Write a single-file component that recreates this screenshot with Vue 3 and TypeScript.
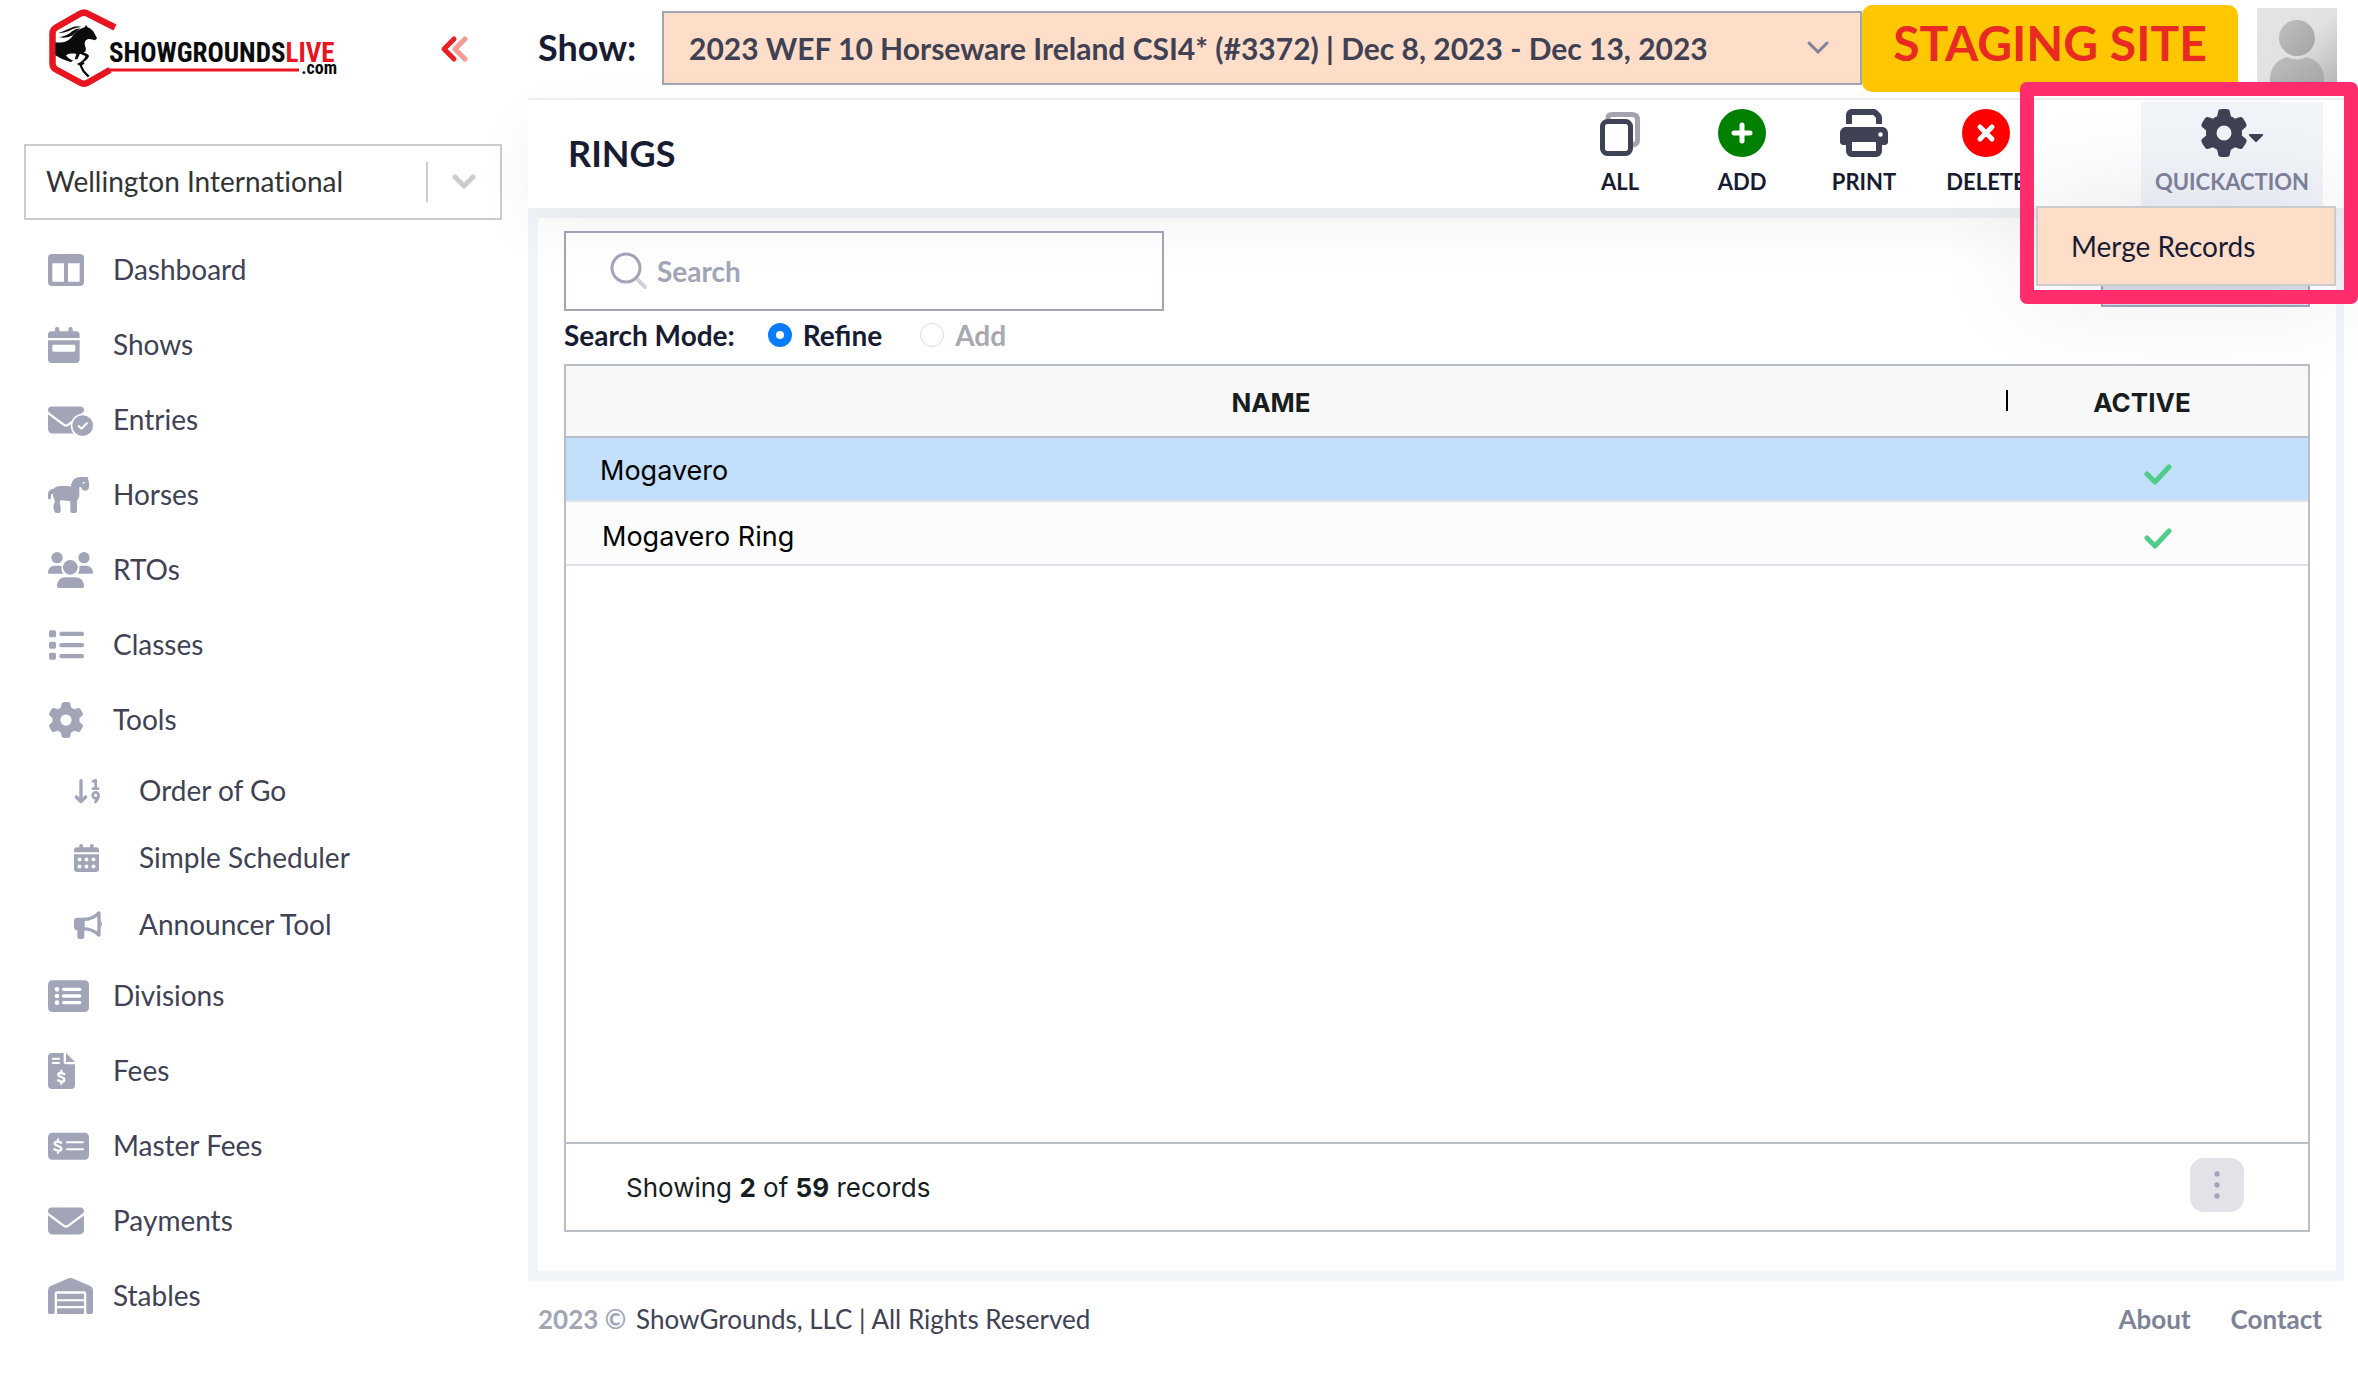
<script setup lang="ts">
import { ref } from 'vue'

type IconName =
  | 'dashboard' | 'shows' | 'entries' | 'horses' | 'rtos' | 'classes' | 'tools'
  | 'order' | 'scheduler' | 'announcer' | 'divisions' | 'fees' | 'master' | 'payments' | 'stables'

interface NavItem {
  label: string
  icon: IconName
  width: number
  sub?: boolean
}

interface Ring {
  name: string
  active: boolean
}

const navItems: NavItem[] = [
  { label: 'Dashboard', icon: 'dashboard', width: 108 },
  { label: 'Shows', icon: 'shows', width: 95 },
  { label: 'Entries', icon: 'entries', width: 135 },
  { label: 'Horses', icon: 'horses', width: 123 },
  { label: 'RTOs', icon: 'rtos', width: 135 },
  { label: 'Classes', icon: 'classes', width: 108 },
  { label: 'Tools', icon: 'tools', width: 108 },
  { label: 'Order of Go', icon: 'order', width: 84, sub: true },
  { label: 'Simple Scheduler', icon: 'scheduler', width: 84, sub: true },
  { label: 'Announcer Tool', icon: 'announcer', width: 84, sub: true },
  { label: 'Divisions', icon: 'divisions', width: 123 },
  { label: 'Fees', icon: 'fees', width: 81 },
  { label: 'Master Fees', icon: 'master', width: 123 },
  { label: 'Payments', icon: 'payments', width: 108 },
  { label: 'Stables', icon: 'stables', width: 135 },
]

const rings: Ring[] = [
  { name: 'Mogavero', active: true },
  { name: 'Mogavero Ring', active: true },
]

const selected = ref(0)
const search = ref('')
const searchMode = ref('refine')

const gearPath =
  'M495.9 166.6c3.2 8.7 .5 18.4-6.4 24.6l-43.3 39.4c1.1 8.3 1.7 16.8 1.7 25.4s-.6 17.1-1.7 25.4l43.3 39.4c6.9 6.2 9.6 15.9 6.4 24.6c-4.4 11.9-9.7 23.3-15.8 34.3l-4.7 8.1c-6.6 11-14 21.4-22.1 31.2c-5.9 7.2-15.7 9.6-24.5 6.8l-55.7-17.7c-13.4 10.3-28.2 18.9-44 25.4l-12.5 57.1c-2 9.1-9 16.3-18.2 17.8c-13.8 2.3-28 3.5-42.5 3.5s-28.7-1.2-42.5-3.5c-9.2-1.5-16.2-8.7-18.2-17.8l-12.5-57.1c-15.8-6.5-30.6-15.1-44-25.4L83.1 425.9c-8.8 2.8-18.6 .3-24.5-6.8c-8.1-9.8-15.5-20.2-22.1-31.2l-4.7-8.1c-6.1-11-11.4-22.4-15.8-34.3c-3.2-8.7-.5-18.4 6.4-24.6l43.3-39.4C64.6 273.1 64 264.6 64 256s.6-17.1 1.7-25.4L22.4 191.2c-6.9-6.2-9.6-15.9-6.4-24.6c4.4-11.9 9.7-23.3 15.8-34.3l4.7-8.1c6.6-11 14-21.4 22.1-31.2c5.9-7.2 15.7-9.6 24.5-6.8l55.7 17.7c13.4-10.3 28.2-18.9 44-25.4l12.5-57.1c2-9.1 9-16.3 18.2-17.8C227.3 1.2 241.5 0 256 0s28.7 1.2 42.5 3.5c9.2 1.5 16.2 8.7 18.2 17.8l12.5 57.1c15.8 6.5 30.6 15.1 44 25.4l55.7-17.7c8.8-2.8 18.6-.3 24.5 6.8c8.1 9.8 15.5 20.2 22.1 31.2l4.7 8.1c6.1 11 11.4 22.4 15.8 34.3zM256 336a80 80 0 1 0 0-160 80 80 0 1 0 0 160z'
const envelopePath =
  'M48 64C21.5 64 0 85.5 0 112c0 15.1 7.1 29.3 19.2 38.4L236.8 313.6c11.4 8.5 27 8.5 38.4 0L492.8 150.4c12.1-9.1 19.2-23.3 19.2-38.4c0-26.5-21.5-48-48-48H48zM0 176V384c0 35.3 28.7 64 64 64H448c35.3 0 64-28.7 64-64V176L294.4 339.2c-22.8 17.1-54 17.1-76.8 0L0 176z'
</script>

<template>
  <div class="app">
    <aside class="sidebar">
      <div class="brand">
        <a href="#" aria-label="ShowGroundsLive home">
          <svg class="logo" width="310" height="80" viewBox="0 0 310 80">
            <path d="M66 18.5L39 4.800Q35 2.500 31 4.800L7 18.500Q3.500 20.500 3.500 24.500V54.500Q3.500 58.500 7 60.500L31 73.500Q35 76 39 73.500L61 61" fill="none" stroke="#e8141f" stroke-width="6.500" />
            <path d="M57 59.500H250V62.500H57z" fill="#e8141f" />
            <g transform="translate(-9 -9) scale(.33333)" fill="#0b0b0b">
              <path d="M46 127C70 130 88 122 96 110C108 92 122 86 134 82L138 75L143 82C152 86 160 92 163 100L171 114Q169 120 163 121C156 116 148 118 144 117C134 122 132 128 136 140C140 150 136 156 130 158Q144 160 147 168Q144 178 130 186L134 190L124 199L110 192L122 186Q136 174 136 168L120 161L112 178L104 178L109 162C98 160 84 160 78 167Q86 176 100 182L92 186Q66 180 46 166z" />
              <path d="M118 196L124 194L134 212L149 228L143 232L128 216z" />
              <path d="M54 100Q74 92 92 84Q108 76 124 81Q100 84 88 92Q74 98 54 100zM57 112Q84 108 96 94Q108 85 122 85Q104 98 98 106Q84 116 57 112z" />
            </g>
            <text x="60" y="53" class="logo-name"><tspan fill="#0b0b0b">SHOWGROUNDS</tspan><tspan fill="#e8141f">LIVE</tspan></text>
            <text x="288" y="65" text-anchor="end" class="logo-com" fill="#0b0b0b">.com</text>
          </svg>
        </a>
        <button class="collapse" type="button" aria-label="Collapse sidebar">
          <svg width="28" height="28" viewBox="0 0 28 28" fill="none" stroke-width="5" stroke-linecap="round" stroke-linejoin="round">
            <path d="M25 4L15 14L25 24" stroke="#f99a94" />
            <path d="M14 4L4 14L14 24" stroke="#ec2020" />
          </svg>
        </button>
      </div>

      <div class="venue">
        <select aria-label="Venue">
          <option>Wellington International</option>
        </select>
        <span class="venue-mark">
          <svg width="26" height="18" viewBox="0 0 26 18" fill="none" stroke="#ccc" stroke-width="5" stroke-linecap="round" stroke-linejoin="round"><path d="M4 4L13 13L22 4" /></svg>
        </span>
      </div>

      <nav>
        <a v-for="item in navItems" :key="item.label" href="#" :class="['nav-item', { sub: item.sub }]">
          <span class="nav-icon">
            <svg :viewBox="`0 0 ${item.width} ${item.sub ? 84 : 108}`" fill="currentColor">
              <template v-if="item.icon === 'dashboard'">
                <path fill-rule="evenodd" d="M12 6H96Q108 6 108 18V90Q108 102 96 102H12Q0 102 0 90V18Q0 6 12 6zM13 34V86Q13 89 16 89H48V34zM60 34V89H92Q95 89 95 86V34z" />
              </template>
              <template v-else-if="item.icon === 'shows'">
                <rect x="21" y="0" width="13" height="24" rx="6" />
                <rect x="61" y="0" width="13" height="24" rx="6" />
                <path d="M0 33V24Q0 13 11 13H84Q95 13 95 24V33zM0 40H95V97Q95 108 84 108H11Q0 108 0 97z" />
                <rect x="13" y="53" width="69" height="21" rx="4" fill="#fff" />
              </template>
              <template v-else-if="item.icon === 'entries'">
                <path transform="scale(.211)" :d="envelopePath" />
                <circle cx="104" cy="71" r="36" fill="#fff" />
                <circle cx="104" cy="71" r="31" />
                <path d="M92 72L100 80L117 64" fill="none" stroke="#fff" stroke-width="6" stroke-linecap="round" stroke-linejoin="round" />
              </template>
              <template v-else-if="item.icon === 'horses'">
                <path d="M69 30C69 12 80 0 97 0H121Q122 2 119 7Q123 11 123 18V30C123 37 117 41 111 41C104 41 102 37 99 31L94 29V52C94 60 91 66 87 71V102Q87 108 81 108H73Q67 108 67 102V73L38 69C35 76 34 82 38 88V102Q38 108 32 108H26Q20 108 19 103C16 94 15 88 19 79Q22 74 19 68Q14 60 15 50C9 50 9 53 9 58V64Q7 68 3 67Q0 66 0 62V52C0 42 8 36 17 35C22 30 28 27 36 27H62Q68 27 69 30z" />
                <circle cx="107" cy="17" r="3" fill="#fff" />
              </template>
              <template v-else-if="item.icon === 'rtos'">
                <circle cx="27" cy="17" r="17" /><circle cx="108" cy="17" r="17" /><circle cx="67" cy="46" r="22" />
                <path d="M0 62C0 49 9 41 21 41H32Q37 41 41 43Q38 55 45 65H3Q0 65 0 62zM135 62C135 49 126 41 114 41H103Q98 41 94 43Q97 55 90 65H132Q135 65 135 62zM27 103C27 86 38 76 54 76H81C97 76 108 86 108 103Q108 108 103 108H32Q27 108 27 103z" />
              </template>
              <template v-else-if="item.icon === 'classes'">
                <rect x="3" y="10" width="21" height="21" rx="5" /><rect x="3" y="44" width="21" height="21" rx="5" /><rect x="3" y="77" width="21" height="21" rx="5" />
                <rect x="34" y="14" width="74" height="13" rx="6" /><rect x="34" y="48" width="74" height="13" rx="6" /><rect x="34" y="81" width="74" height="13" rx="6" />
              </template>
              <path v-else-if="item.icon === 'tools'" transform="scale(.211)" :d="gearPath" />
              <template v-else-if="item.icon === 'order'">
                <g fill="none" stroke="currentColor" stroke-width="10" stroke-linecap="round" stroke-linejoin="round">
                  <path d="M21 11V73M7 60L21 74L35 60" />
                  <path stroke-width="8" d="M57 13L65 10V34M57 35H72" />
                  <circle cx="65" cy="55" r="9" stroke-width="8" />
                  <path stroke-width="8" d="M74 57Q73 66 64 75" />
                </g>
              </template>
              <template v-else-if="item.icon === 'scheduler'">
                <rect x="16" y="0" width="11" height="18" rx="5" /><rect x="48" y="0" width="11" height="18" rx="5" />
                <path d="M0 25V19Q0 10 9 10H66Q75 10 75 19V25zM0 31H75V75Q75 84 66 84H9Q0 84 0 75z" />
                <g fill="#fff">
                  <rect x="11" y="41" width="11" height="11" rx="3" /><rect x="32" y="41" width="11" height="11" rx="3" /><rect x="53" y="41" width="11" height="11" rx="3" />
                  <rect x="11" y="62" width="11" height="11" rx="3" /><rect x="32" y="62" width="11" height="11" rx="3" /><rect x="53" y="62" width="11" height="11" rx="3" />
                </g>
              </template>
              <template v-else-if="item.icon === 'announcer'">
                <path d="M10 20H32V58H31V78Q31 84 25 84H16Q10 84 10 78V58Q0 57 0 48V30Q0 20 10 20z" />
                <path d="M28 25Q56 25 75 6V72Q56 54 28 53" fill="none" stroke="currentColor" stroke-width="10" stroke-linejoin="round" />
                <path d="M79 29Q84 32 84 39T79 49z" />
              </template>
              <template v-else-if="item.icon === 'divisions'">
                <rect x="0" y="7" width="123" height="95" rx="13" />
                <g fill="#fff">
                  <circle cx="27" cy="34" r="7" /><circle cx="27" cy="54" r="7" /><circle cx="27" cy="74" r="7" />
                  <rect x="42" y="29" width="58" height="10" rx="5" /><rect x="42" y="49" width="58" height="10" rx="5" /><rect x="42" y="69" width="58" height="10" rx="5" />
                </g>
              </template>
              <template v-else-if="item.icon === 'fees'">
                <path d="M12 0H47V28Q47 34 53 34H81V96Q81 108 69 108H12Q0 108 0 96V12Q0 0 12 0zM54 0L81 27H54z" />
                <path d="M14 17H33M14 30H33" stroke="#fff" stroke-width="6" stroke-linecap="round" />
                <path d="M49 63Q42 60 38 60Q31 60 31 65Q31 69 40 72Q49 75 49 80Q49 86 41 86Q36 86 30 82M40 53V59M40 86V92" fill="none" stroke="#fff" stroke-width="7" stroke-linecap="round" />
              </template>
              <template v-else-if="item.icon === 'master'">
                <rect x="0" y="14" width="123" height="81" rx="13" />
                <path d="M57 43H105M57 64H105" stroke="#fff" stroke-width="6" stroke-linecap="round" />
                <path d="M39 44Q32 41 28 41Q20 41 20 46Q20 51 30 54Q40 57 40 62Q40 68 31 68Q26 68 19 64M30 34V40M30 68V74" fill="none" stroke="#fff" stroke-width="7" stroke-linecap="round" />
              </template>
              <path v-else-if="item.icon === 'payments'" transform="scale(.211)" :d="envelopePath" />
              <path v-else d="M0 37Q0 28 8 24L62 1Q67 -1 73 1L127 24Q135 28 135 37V103Q135 108 130 108H120Q115 108 115 103V47Q115 40 108 40H27Q20 40 20 47V103Q20 108 15 108H5Q0 108 0 103zM27 47H108V64H27zM27 70H108V84H27zM27 91H108V104Q108 108 104 108H31Q27 108 27 104z" />
            </svg>
          </span>
          <span class="nav-label">{{ item.label }}</span>
        </a>
      </nav>
    </aside>

    <div class="main">
      <header class="topbar">
        <label class="show-label" for="show">Show:</label>
        <div class="show-select">
          <select id="show">
            <option>2023 WEF 10 Horseware Ireland CSI4* (#3372) | Dec 8, 2023 - Dec 13, 2023</option>
          </select>
          <svg width="24" height="16" viewBox="0 0 24 16" fill="none" stroke="#7e8299" stroke-width="3" stroke-linecap="round" stroke-linejoin="round"><path d="M3 3L12 12L21 3" /></svg>
        </div>
        <div class="staging">STAGING SITE</div>
        <svg class="avatar" width="80" height="80" viewBox="0 0 80 80" role="img" aria-label="User">
          <defs>
            <linearGradient id="av-bg" x1="0" y1="0" x2="1" y2="1">
              <stop offset="0" stop-color="#e4e4e4" /><stop offset=".5" stop-color="#e2e2e2" /><stop offset="1" stop-color="#b4b4b4" />
            </linearGradient>
            <linearGradient id="av-fg" x1="0" y1="0" x2="1" y2="1">
              <stop offset="0" stop-color="#bdbfc1" /><stop offset="1" stop-color="#a4a4a6" />
            </linearGradient>
          </defs>
          <rect width="80" height="80" fill="url(#av-bg)" />
          <circle cx="40" cy="30" r="18" fill="url(#av-fg)" />
          <path d="M13 80V72Q13 54 30 49Q40 54 50 49Q67 54 67 72V80z" fill="url(#av-fg)" />
        </svg>
      </header>

      <div class="toolbar">
        <h1>RINGS</h1>
        <div class="actions">
          <button class="action" type="button">
            <svg width="48" height="48" viewBox="0 0 48 48" fill="none" stroke-width="5">
              <path d="M12 10V9Q12 5.500 16 5.500H36Q41.500 5.500 41.500 11V31Q41.500 35 37 36" stroke="#a3a4ae" />
              <rect x="6.500" y="12.500" width="28" height="32" rx="5" stroke="#3f4254" />
            </svg>
            ALL
          </button>
          <button class="action" type="button">
            <svg width="48" height="48" viewBox="0 0 48 48"><circle cx="24" cy="24" r="24" fill="green" /><path d="M24 16V32M16 24H32" stroke="#fff" stroke-width="5" stroke-linecap="round" /></svg>
            ADD
          </button>
          <button class="action" type="button">
            <svg width="48" height="48" viewBox="0 0 512 512" fill="#3f4254"><path d="M128 0C92.7 0 64 28.7 64 64v96h64V64H354.7L384 93.3V160h64V93.3c0-17-6.7-33.3-18.7-45.3L400 18.7C388 6.7 371.7 0 354.7 0H128zM384 352v32 64H128V384 368 352H384zm64 32h32c17.7 0 32-14.3 32-32V256c0-35.3-28.7-64-64-64H64c-35.3 0-64 28.7-64 64v96c0 17.7 14.3 32 32 32H64v64c0 35.3 28.7 64 64 64H384c35.3 0 64-28.7 64-64V384zM432 248a24 24 0 1 1 0 48 24 24 0 1 1 0-48z" /></svg>
            PRINT
          </button>
          <button class="action" type="button">
            <svg width="48" height="48" viewBox="0 0 48 48"><circle cx="24" cy="24" r="24" fill="red" /><path d="M18 18L30 30M30 18L18 30" stroke="#fff" stroke-width="5" stroke-linecap="round" /></svg>
            DELETE
          </button>
        </div>
        <div class="quick">
          <button class="action quick-btn" type="button" aria-haspopup="menu" aria-expanded="true">
            <span class="quick-icon">
              <svg width="48" height="48" viewBox="0 0 512 512" fill="#3f4254"><path :d="gearPath" /></svg>
              <svg width="16" height="10" viewBox="0 0 16 10" fill="#3f4254"><path d="M2 1H14Q16 1.500 14.500 3L9 8.500Q8 9.500 7 8.500L1.500 3Q0 1.500 2 1z" /></svg>
            </span>
            QUICKACTION
          </button>
          <div class="menu" role="menu">
            <button type="button" role="menuitem">Merge Records</button>
          </div>
          <div class="highlight"></div>
        </div>
      </div>

      <main class="content">
        <div class="search-row">
          <div class="search">
            <svg width="40" height="40" viewBox="0 0 40 40" fill="none" stroke-linecap="round">
              <path d="M29 29L36 36" stroke="#d0d2db" stroke-width="4" />
              <circle cx="17" cy="17" r="14" stroke="#a1a5b7" stroke-width="3" />
            </svg>
            <input v-model="search" type="text" placeholder="Search" aria-label="Search" />
          </div>
          <button class="view-btn" type="button" aria-label="View options"></button>
        </div>

        <div class="mode" role="radiogroup" aria-label="Search Mode">
          <span class="mode-title">Search Mode:</span>
          <label class="mode-option"><input v-model="searchMode" type="radio" name="mode" value="refine" />Refine</label>
          <label class="mode-option disabled"><input v-model="searchMode" type="radio" name="mode" value="add" disabled />Add</label>
        </div>

        <section class="grid">
          <table>
            <thead>
              <tr>
                <th class="name-head">NAME</th>
                <th class="active-head">ACTIVE</th>
              </tr>
            </thead>
            <tbody>
              <tr v-for="(ring, i) in rings" :key="ring.name" :class="{ selected: i === selected }" @click="selected = i">
                <td class="name">{{ ring.name }}</td>
                <td class="flag">
                  <svg v-if="ring.active" width="28" height="22" viewBox="0 0 28 22" fill="none" stroke="#50cd89" stroke-width="5" stroke-linecap="round" stroke-linejoin="round" role="img" aria-label="Yes"><path d="M3 10L11 18L25 3" /></svg>
                </td>
              </tr>
            </tbody>
          </table>
          <div class="grid-footer">
            <p>Showing <b>2</b> of <b>59</b> records</p>
            <button class="more" type="button" aria-label="More">
              <svg width="6" height="28" viewBox="0 0 6 28" fill="#a1a5b7"><circle cx="3" cy="3" r="2.700" /><circle cx="3" cy="14" r="2.700" /><circle cx="3" cy="25" r="2.700" /></svg>
            </button>
          </div>
        </section>
      </main>

      <footer class="page-footer">
        <p><span class="year">2023 ©</span>ShowGrounds, LLC | All Rights Reserved</p>
        <div class="links">
          <a href="#">About</a>
          <a href="#">Contact</a>
        </div>
      </footer>
    </div>
  </div>
</template>

<style>
body {
  background: #fff;
}
</style>

<style scoped>
* {
  box-sizing: border-box;
}

.app {
  display: flex;
  min-height: 100vh;
  overflow-x: hidden;
  font-family: Lato, sans-serif;
  font-size: 28px;
  color: #181c32;
}

button,
select,
input {
  font: inherit;
  color: inherit;
  margin: 0;
}

button {
  border: 0;
  padding: 0;
  background: none;
  cursor: pointer;
}

a {
  color: inherit;
  text-decoration: none;
}

p,
h1 {
  margin: 0;
}

svg {
  display: block;
  flex: none;
}

/* Sidebar */
.sidebar {
  flex: none;
  width: 528px;
}

.brand {
  display: flex;
  align-items: center;
  justify-content: space-between;
  height: 144px;
  padding: 9px 60px 55px 49px;
}

.logo-name {
  font: bold 27px 'Roboto Condensed', 'Open Sans Condensed', Lato, sans-serif;
}

.logo-com {
  font: bold 18px 'Roboto Condensed', 'Open Sans Condensed', Lato, sans-serif;
}

.venue {
  position: relative;
  height: 76px;
  margin: 0 26px 12px 24px;
}

.venue select {
  width: 100%;
  height: 100%;
  padding: 0 80px 2px 20px;
  border: 2px solid #ccc;
  border-radius: 0;
  background: #fff;
  color: #333;
  font-variant-ligatures: none;
  appearance: none;
}

.venue-mark {
  position: absolute;
  top: 18px;
  right: 25px;
  display: flex;
  align-items: center;
  height: 40px;
  padding-left: 23px;
  border-left: 2px solid #ccc;
  pointer-events: none;
}

.nav-item {
  display: flex;
  align-items: center;
  height: 75px;
  padding-left: 48px;
  color: #3f4254;
}

.nav-icon {
  width: 65px;
  color: #a1a5b7;
}

.nav-icon svg {
  height: 36px;
}

.nav-label {
  padding-bottom: 1px;
}

.nav-item.sub {
  height: 67px;
  padding-left: 74px;
}

.nav-item.sub .nav-icon svg {
  height: 28px;
}

/* Main column */
.main {
  flex: 1;
  min-width: 0;
  display: flex;
  flex-direction: column;
  margin-right: 14px;
}

.topbar {
  display: flex;
  align-items: center;
  height: 100px;
  padding: 0 7px 2px 10px;
  border-bottom: 2px solid #eff0f6;
}

.show-label {
  width: 124px;
  padding-bottom: 2px;
  font-size: 36px;
  font-weight: 700;
}

.show-select {
  position: relative;
  flex: 1;
  min-width: 0;
}

.show-select select {
  width: 100%;
  height: 74px;
  padding: 0 70px 0 25px;
  border: 2px solid #a1a5b7;
  border-radius: 0;
  background: #ffdec9;
  color: #3f4254;
  font-size: 30px;
  font-weight: 700;
  appearance: none;
}

.show-select svg {
  position: absolute;
  top: 29px;
  right: 32px;
  pointer-events: none;
}

.staging {
  width: 376px;
  height: 87px;
  border-radius: 10px;
  background: #ffc700;
  color: #e92a22;
  font-size: 48px;
  font-weight: 700;
  line-height: 75px;
  text-align: center;
}

.avatar {
  margin-left: 19px;
}

.toolbar {
  position: relative;
  z-index: 1;
  display: flex;
  height: 108px;
  padding: 2px 21px 0 40px;
  background: #fff;
  box-shadow: 0 20px 60px rgba(0, 0, 0, 0.05);
}

.toolbar h1 {
  flex: 1;
  font-size: 36px;
  font-weight: 700;
  line-height: 102px;
}

.actions {
  display: flex;
  margin-right: 94px;
}

.action {
  display: flex;
  flex-direction: column;
  align-items: center;
  gap: 12px;
  width: 122px;
  padding-top: 7px;
  font-size: 22px;
  font-weight: 700;
  line-height: 26px;
}

.quick {
  position: relative;
}

.quick-btn {
  width: 182px;
  height: 106px;
  background: #f1f5f9;
  color: #7e8299;
}

.quick-icon {
  display: flex;
  align-items: center;
}

.quick-icon svg:last-child {
  margin-top: 10px;
}

.menu {
  position: absolute;
  top: 104px;
  right: -13px;
  width: 300px;
  height: 80px;
  border: 2px solid #ccc;
  background: #ffdec9;
  box-shadow: 0 0 100px rgba(82, 63, 105, 0.15);
}

.menu button {
  width: 100%;
  height: 100%;
  padding-left: 33px;
  text-align: left;
}

.highlight {
  position: absolute;
  top: -20px;
  right: -35px;
  width: 338px;
  height: 222px;
  border: 14px solid #ff2d6b;
  border-radius: 7px;
  pointer-events: none;
}

.content {
  flex: 1;
  display: flex;
  flex-direction: column;
  padding: 13px 26px 39px;
  border: solid #f1f5f9;
  border-width: 10px 8px 10px 10px;
}

.search-row {
  display: flex;
  justify-content: space-between;
  align-items: flex-start;
}

.search {
  display: flex;
  align-items: center;
  gap: 8px;
  width: 600px;
  height: 80px;
  padding-left: 43px;
  border: 2px solid #a1a5b7;
}

.search input {
  flex: 1;
  min-width: 0;
  height: 100%;
  padding: 0;
  border: 0;
  outline: 0;
  background: none;
  font-weight: 700;
}

.search input::placeholder {
  color: #a1a5b7;
  opacity: 1;
}

.view-btn {
  width: 209px;
  height: 76px;
  border: 2px solid #a1a5b7;
  background: #dcdeeb;
}

.mode {
  display: flex;
  align-items: center;
  height: 53px;
  padding-bottom: 6px;
  font-weight: 700;
}

.mode-title {
  margin-right: 33px;
}

.mode-option {
  display: flex;
  align-items: center;
  gap: 11px;
  margin-right: 38px;
}

.mode-option input {
  width: 24px;
  height: 24px;
  border: 1px solid #d5d5d5;
  border-radius: 50%;
  background: #fff;
  appearance: none;
}

.mode-option input:checked {
  border: 8px solid #0a7cff;
}

.disabled {
  color: #a9a9b0;
}

.disabled input {
  border-color: #dcdcdc;
}

/* Records grid */
.grid {
  flex: 1;
  display: flex;
  flex-direction: column;
  border: 2px solid #babfc7;
  font-family: Inter, sans-serif;
}

table {
  width: 100%;
  border-collapse: separate;
  border-spacing: 0;
  table-layout: fixed;
}

th {
  position: relative;
  height: 72px;
  padding: 2px 32px 0 0;
  border-bottom: 2px solid #babfc7;
  background: #f8f8f8;
  color: #181d1f;
  font-size: 26px;
  font-weight: 700;
}

.name-head::after {
  content: '';
  position: absolute;
  top: 24px;
  right: 0;
  width: 2px;
  height: 21px;
  background: #000;
}

.active-head {
  width: 300px;
}

td {
  height: 64px;
  padding: 0;
  border-bottom: 2px solid #dde2eb;
  background: #fcfcfc;
  color: #000;
  font-size: 27px;
}

.name {
  padding: 6px 34px 0 36px;
}

.flag {
  padding: 12px 0 0 136px;
}

.selected td {
  background: #c2dffb;
}

.selected .name {
  padding-top: 2px;
  padding-left: 34px;
}

.grid-footer {
  display: flex;
  align-items: center;
  justify-content: space-between;
  height: 88px;
  margin-top: auto;
  padding: 0 64px 0 60px;
  border-top: 2px solid #babfc7;
  color: #181d1f;
  font-size: 26px;
}

.more {
  display: flex;
  align-items: center;
  justify-content: center;
  width: 54px;
  height: 54px;
  margin-bottom: 4px;
  border-radius: 14px;
  background: #e2e3e9;
}

.page-footer {
  display: flex;
  justify-content: space-between;
  height: 109px;
  padding: 22px 22px 0 10px;
  color: #3f4254;
  font-size: 26px;
  line-height: 32px;
}

.year {
  margin-right: 10px;
  color: #a1a5b7;
  font-weight: 700;
}

.links {
  display: flex;
  gap: 40px;
  color: #7e8299;
  font-weight: 700;
}
</style>
